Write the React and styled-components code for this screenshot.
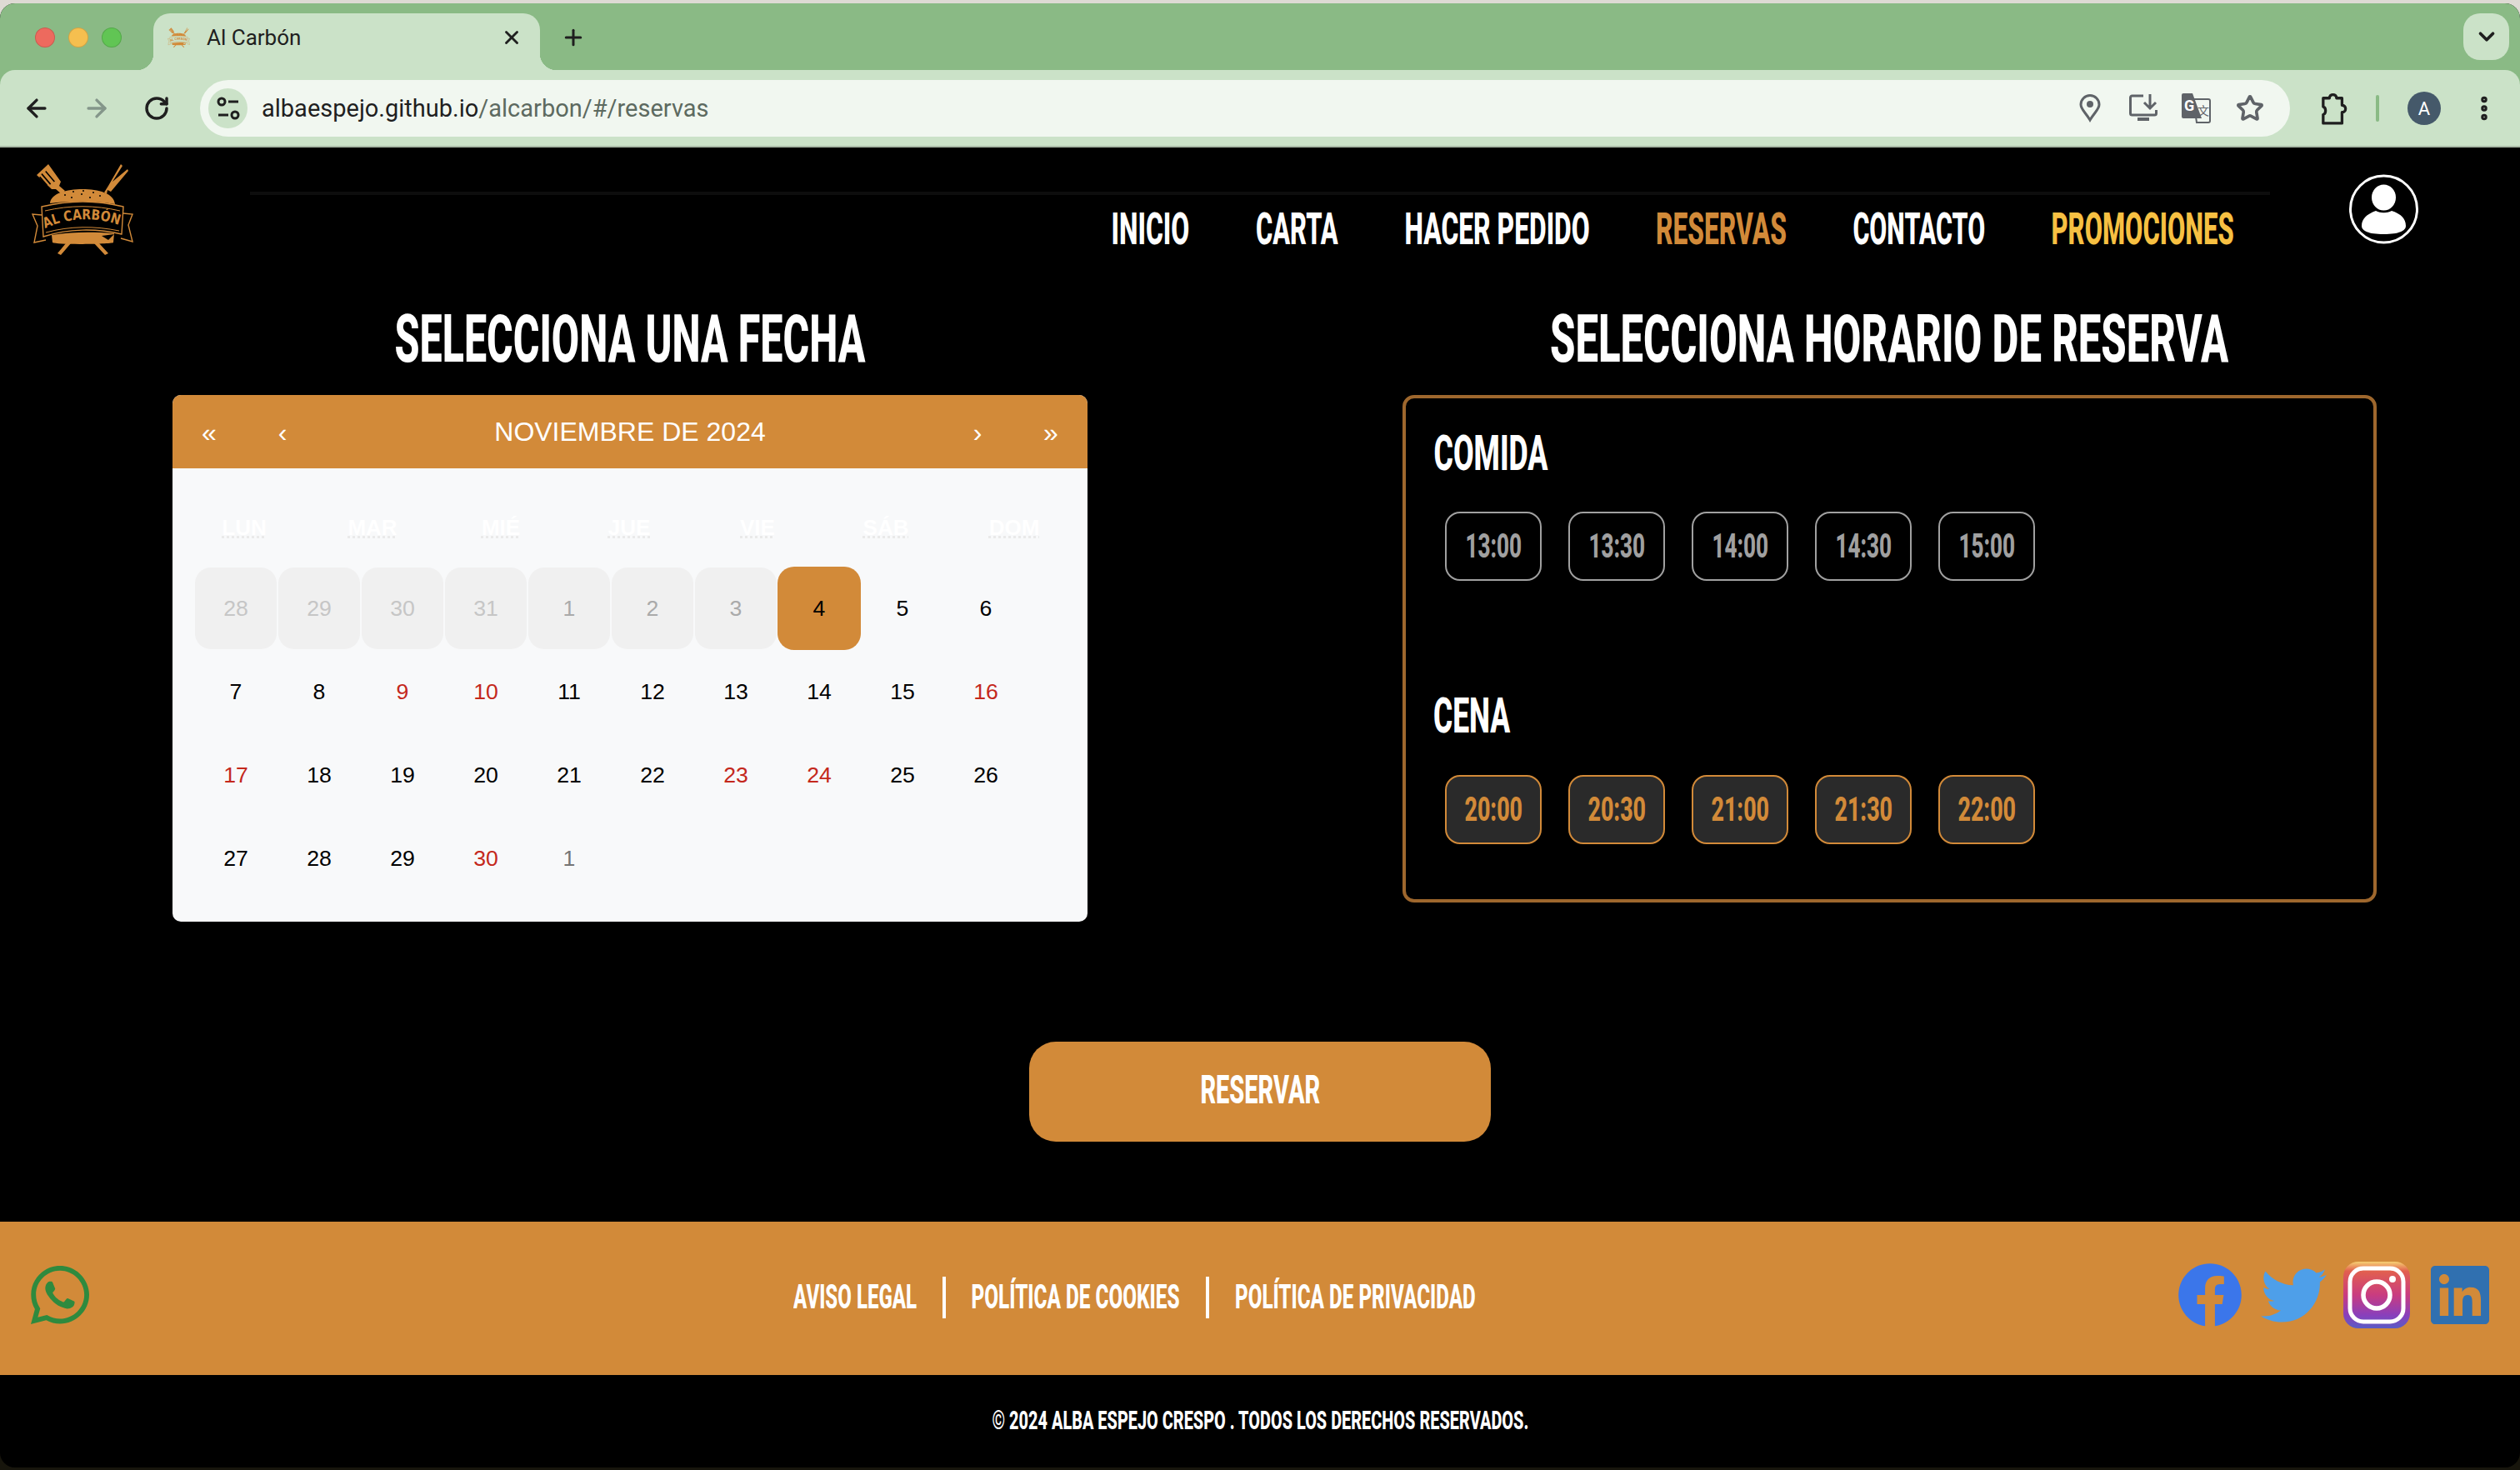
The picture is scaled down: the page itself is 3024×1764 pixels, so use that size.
import React, { useLayoutEffect, useRef } from 'react';
import styled, { createGlobalStyle } from 'styled-components';
import { ArrowLeft, ArrowRight, ChevronDown, MoreVertical, Plus, RotateCw, Star, X } from 'lucide-react';
import { FaFacebook, FaLinkedin, FaTwitter, FaWhatsapp } from 'react-icons/fa';

const ORANGE = '#d28a39';

const GlobalStyle = createGlobalStyle`
    html, body {
        margin: 0;
        padding: 0;
        background: #000;
    }
`;

const Screen = styled.div`
    width: 3024px;
    height: 1764px;
    padding-top: 4px;
    box-sizing: border-box;
    overflow: hidden;
    background: linear-gradient(#dedad4 50%, #17150c 50%);
`;

const Window = styled.div`
    height: 1757px;
    overflow: hidden;
    border-radius: 18px;
    background: #000;
`;

/* browser chrome */
const Chrome = styled.div`
    background: #8aba85;
    font-family: Roboto, sans-serif;
    color: #1f1f1f;
`;

const TabStrip = styled.div`
    height: 80px;
    box-sizing: border-box;
    padding: 12px 13px 0 42px;
    display: flex;
`;

const Lights = styled.div`
    display: flex;
    gap: 16px;
    margin-top: 17px;
`;

const Light = styled.span`
    width: 24px;
    height: 24px;
    box-sizing: border-box;
    border-radius: 50%;
    background: ${props => props.$color};
    border: 1px solid rgba(0, 0, 0, 0.14);
`;

const Tab = styled.div`
    position: relative;
    width: 464px;
    height: 68px;
    box-sizing: border-box;
    margin-left: 38px;
    padding: 0 21px 11px 17px;
    display: flex;
    align-items: center;
    background: #cbe2c8;
    border-radius: 20px 20px 0 0;

    &::before, &::after {
        content: '';
        position: absolute;
        bottom: 0;
        width: 20px;
        height: 20px;
    }
    &::before {
        left: -20px;
        background: radial-gradient(circle at 0 0, transparent 20px, #cbe2c8 20.5px);
    }
    &::after {
        right: -20px;
        background: radial-gradient(circle at 100% 0, transparent 20px, #cbe2c8 20.5px);
    }
`;

const TabTitle = styled.span`
    margin-left: 20px;
    font-size: 26px;
    white-space: nowrap;
`;

const TabClose = styled.span`
    margin-left: auto;
    display: flex;
`;

const NewTab = styled.span`
    margin: 14px 0 0 25px;
    height: 30px;
    display: flex;
`;

const TabMenu = styled.span`
    margin-left: auto;
    width: 55px;
    height: 56px;
    border-radius: 20px;
    background: #cbe2c8;
    display: flex;
    align-items: center;
    justify-content: center;
`;

const Toolbar = styled.div`
    height: 93px;
    box-sizing: border-box;
    padding: 12px 0 0 8px;
    display: flex;
    align-items: flex-start;
    background: #cbe2c8;
    border-bottom: 2px solid #a9b9a6;
    border-radius: 18px 18px 0 0;
`;

const NavButton = styled.span`
    width: 72px;
    height: 68px;
    display: flex;
    align-items: center;
    justify-content: center;
    color: ${props => props.$muted ? '#84968a' : '#1f1f1f'};
`;

const Omnibox = styled.div`
    flex: 0 0 2508px;
    height: 68px;
    box-sizing: border-box;
    margin-left: 16px;
    padding: 0 28px 0 10px;
    display: flex;
    align-items: center;
    background: #f1f7f0;
    border-radius: 34px;
`;

const SiteButton = styled.span`
    width: 47px;
    height: 48px;
    border-radius: 50%;
    background: #cbe2c8;
    display: flex;
    align-items: center;
    justify-content: center;
`;

const Url = styled.div`
    margin-left: 17px;
    font-size: 29px;
    white-space: nowrap;
    color: #5d6a60;

    strong {
        font-weight: 400;
        color: #1f1f1f;
    }
`;

const OmniIcons = styled.div`
    margin-left: auto;
    display: flex;
    gap: 24px;
`;

const OmniIcon = styled.span`
    width: 40px;
    height: 44px;
    display: flex;
    align-items: center;
    justify-content: center;
    color: #5f6368;
`;

const ToolIcons = styled.div`
    height: 68px;
    padding-left: 37px;
    display: flex;
    align-items: center;
    gap: 34px;
`;

const ToolSeparator = styled.span`
    width: 4px;
    height: 32px;
    border-radius: 2px;
    background: #8aba85;
`;

const Avatar = styled.span`
    width: 40px;
    height: 40px;
    border-radius: 50%;
    background: #45596a;
    color: #fff;
    font-size: 22px;
    display: flex;
    align-items: center;
    justify-content: center;
`;

/* bebas neue is not installed: roboto squeezed to the width the text has in the design */
const CondBox = styled.span`
    display: inline-flex;
    justify-content: center;
    width: ${props => props.$w}px;
    font-family: Roboto, "Liberation Sans", sans-serif;
    font-weight: 800;
    white-space: nowrap;
`;

const CondInk = styled.span`
    flex: none;
    transform-origin: center;
`;

const Cond = ({ w, children }) => {
    const ink = useRef(null);

    useLayoutEffect(() => {
        ink.current.style.transform = `scaleX(${w / ink.current.offsetWidth})`;
    }, [w]);

    return <CondBox $w={w}><CondInk ref={ink}>{children}</CondInk></CondBox>;
};

/* site header */
const Header = styled.header`
    height: 190px;
    box-sizing: border-box;
    padding: 19px 0 0 38px;
    display: flex;
    align-items: flex-start;
`;

const NavColumn = styled.div`
    width: 2424px;
    margin: 34px 0 0 140px;
    border-top: 4px solid #0d0d0d;
`;

const Nav = styled.nav`
    padding: 14px 43px 0 0;
    display: flex;
    justify-content: flex-end;
    gap: 79.5px;
`;

const NavLink = styled.a`
    font-size: 54px;
    line-height: 54px;
    color: ${props => props.$color || '#fff'};
`;

const UserButton = styled.span`
    margin: 13px 0 0 95px;
    display: flex;
`;

/* reservation form */
const Columns = styled.main`
    padding-left: 207px;
    display: flex;
    align-items: flex-start;
    gap: 378px;
`;

const Column = styled.section`
    width: ${props => props.$w}px;
    display: flex;
    flex-direction: column;
    align-items: center;
`;

const Heading = styled.h1`
    margin: 0 0 27px;
    font-size: 80px;
    line-height: 80px;
    font-weight: inherit;
    color: #fff;
`;

const Calendar = styled.div`
    width: 100%;
    height: 632px;
    overflow: hidden;
    background: #f8f9fa;
    border-radius: 10px;
    font-family: "Liberation Sans", Arial, sans-serif;
`;

const CalendarBar = styled.div`
    height: 88px;
    display: flex;
    align-items: center;
    background: ${ORANGE};
    color: #fff;
`;

const CalendarArrow = styled.span`
    width: 88px;
    text-align: center;
    font-size: 32px;
    padding-top: 2px;
`;

const CalendarTitle = styled.span`
    flex: 1;
    text-align: center;
    font-size: 32px;
`;

const Weekdays = styled.div`
    margin: 46px 0 22px 9px;
    height: 50px;
    display: grid;
    grid-template-columns: repeat(7, 154px);
    align-items: center;
    justify-items: center;

    abbr {
        font-size: 26px;
        font-weight: 700;
        color: #fff;
        text-decoration: underline dotted #e8e8e8;
    }
`;

const Days = styled.div`
    padding-left: 26px;
    display: grid;
    grid-template-columns: repeat(10, 100px);
    grid-auto-rows: 100px;
`;

const dayStyles = {
    normal: 'color: #000;',
    weekend: 'color: #c4281c;',
    next: 'color: #757575;',
    selected: `color: #000; background: ${ORANGE};`,
    past: 'color: #c6c6c6; background: #f0f0f0; background-clip: padding-box; border: 1px solid transparent;',
    disabled: 'color: #aaa; background: #f0f0f0; background-clip: padding-box; border: 1px solid transparent;',
};

const Day = styled.span`
    box-sizing: border-box;
    display: flex;
    align-items: center;
    justify-content: center;
    border-radius: 20px;
    font-size: 26.67px;
    ${props => dayStyles[props.$kind]}
`;

const ScheduleBox = styled.div`
    width: 100%;
    height: 609px;
    box-sizing: border-box;
    padding: 36px 33px 0;
    border: 4px solid #9e672d;
    border-radius: 14px;
`;

const SlotTitle = styled.h2`
    margin: 0;
    font-size: 60px;
    line-height: 60px;
    font-weight: inherit;
    color: #fff;
`;

const SlotRow = styled.div`
    margin: ${props => props.$last ? 41 : 40}px 0 ${props => props.$last ? 0 : 132}px 14px;
    display: flex;
    gap: 32px;
`;

const SlotButton = styled.span`
    width: 116px;
    height: 83px;
    box-sizing: border-box;
    padding-bottom: 2px;
    display: flex;
    align-items: center;
    justify-content: center;
    border-radius: 18px;
    font-size: 41px;
    border: 2px solid ${props => props.$open ? ORANGE : '#a0a0a0'};
    color: ${props => props.$open ? ORANGE : '#a0a0a0'};
    background: ${props => props.$open ? '#2a2a2a' : 'transparent'};
`;

const ReserveButton = styled.button`
    display: flex;
    align-items: center;
    justify-content: center;
    width: 554px;
    height: 120px;
    margin: 144px auto 96px;
    padding: 0 0 5px;
    border: 0;
    border-radius: 32px;
    background: ${ORANGE};
    color: #fff;
    font-size: 48px;
    line-height: 48px;
`;

/* footer */
const FooterBar = styled.footer`
    height: 184px;
    box-sizing: border-box;
    padding: 48px 32px 0;
    display: flex;
    align-items: flex-start;
    background: ${ORANGE};
`;

const WhatsApp = styled.span`
    display: flex;
    color: #2f8a3e;
`;

const LegalLinks = styled.div`
    margin: 18px 0 0 840px;
    height: 50px;
    display: flex;
    align-items: center;
    gap: 31px;
    font-size: 40px;
    line-height: 40px;
    color: #fff;
`;

const LegalSeparator = styled.span`
    width: 4px;
    height: 50px;
    background: #fff;
`;

const Socials = styled.div`
    margin-left: auto;
    height: 80px;
    display: flex;
    align-items: center;
`;

const Social = styled.span`
    margin-left: ${props => props.$gap}px;
    display: flex;
    color: ${props => props.$color};
`;

const Copyright = styled.div`
    height: 108px;
    display: flex;
    align-items: center;
    justify-content: center;
    font-size: 31px;
    color: #fff;
`;

const Logo = ({ width, height, id, ink = '#000' }) => (
    <svg width={width} height={height} viewBox="0 0 122 110" fill={ORANGE} stroke="none">
        <path d="M6 14 20 1 35 22 33 27 40 33 36 37 29 31 24 31Z" />
        <g stroke={ink} strokeWidth="1.6">
            <path d="M11 14 24 24M15 10 28 20M9.500 18 20 26" transform="rotate(12 18 18)" />
        </g>
        <path d="M107 1 109 3 97 22 115 7 116 9 95 34 91 32 90 37 87 35 92 27Z" />
        <path d="M22 48C23 36 42 31 61 31S99 36 100 49C76 45 46 45 22 48Z" />
        <g fill={ink}>
            <circle cx="40" cy="38" r="1" /><circle cx="50" cy="34" r="1" /><circle cx="60" cy="37" r="1" />
            <circle cx="62" cy="33" r="1" /><circle cx="74" cy="35" r="1" /><circle cx="82" cy="39" r="1" />
            <circle cx="48" cy="41" r="1" /><circle cx="70" cy="41" r="1" />
        </g>
        <path d="M12 52C45 44 78 44 110 52L108 85C78 78 44 78 14 88Z" fill={ink} stroke={ORANGE} strokeWidth="1.4" />
        <path d="M16 57C46 50 76 50 106 57" fill="none" stroke={ORANGE} strokeWidth="1" />
        <path d="M17 83C46 75 76 75 105 81" fill="none" stroke={ORANGE} strokeWidth="1" />
        <path d="M12 62 1 61 7 75 3 95 17 92M110 60 121 61 116 74 121 94 107 90" fill="none" stroke={ORANGE} strokeWidth="1.4" />
        <path id={id} d="M16 78C44 65 78 63 110 76" fill="none" />
        <text fontFamily="DejaVu Sans, sans-serif" fontWeight="700" fontSize="17">
            <textPath href={`#${id}`} textLength="91" lengthAdjust="spacingAndGlyphs">AL CARBÓN</textPath>
        </text>
        <path d="M24 86C50 82 72 82 99 84L98 95C96 97 30 98 25 95Z" />
        <path d="M84 87 99 85 92 92Z" fill={ink} />
        <path d="M41 96 47 96 35 110 31 108ZM75 96 81 96 92 108 88 110Z" />
    </svg>
);

const SiteIcon = () => (
    <svg width="28" height="30" viewBox="0 0 28 30" fill="none" stroke="#1f1f1f" strokeWidth="3">
        <circle cx="6" cy="7" r="4" />
        <path d="M14 7H26M2 23H14" />
        <circle cx="22" cy="23" r="4" />
    </svg>
);

const PinIcon = () => (
    <svg width="26" height="34" viewBox="0 0 26 34" fill="none" stroke="currentColor" strokeWidth="3">
        <path d="M13 31C7 21 2 18 2 12.500A11 11 0 0 1 24 12.500C24 18 19 21 13 31Z" />
        <circle cx="13" cy="12" r="4" fill="currentColor" stroke="none" />
    </svg>
);

const InstallIcon = () => (
    <svg width="34" height="36" viewBox="0 0 34 36" fill="none" stroke="currentColor" strokeWidth="3">
        <path d="M17 3H3.500A2 2 0 0 0 1.500 5V24A2 2 0 0 0 3.500 26H30.500A2 2 0 0 0 32.500 24V20" />
        <path d="M25 1V17M18 11 25 18 32 11" />
        <path d="M10 29H24V33H10Z" fill="currentColor" stroke="none" />
    </svg>
);

const TranslateIcon = () => (
    <svg width="36" height="36" viewBox="0 0 36 36">
        <path d="M14 7H32A2 2 0 0 1 34 9V33A2 2 0 0 1 32 35H18Z" fill="none" stroke="currentColor" strokeWidth="2" />
        <path d="M2 0H13L24 30H2A2 2 0 0 1 0 28V2A2 2 0 0 1 2 0Z" fill="currentColor" />
        <text x="3" y="21" fill="#fff" fontFamily="Roboto, sans-serif" fontWeight="700" fontSize="18">G</text>
        <text x="19" y="26" fill="currentColor" fontFamily="Noto Sans CJK SC, sans-serif" fontSize="14">文</text>
    </svg>
);

const ExtensionIcon = () => (
    <svg width="32" height="44" viewBox="0 0 34 44" fill="none" stroke="#1f1f1f" strokeWidth="3.500">
        <path d="M3 9H11C11 3 20 3 20 9H27V18C33 18 33 27 27 27V41H3V30C7 29 7 21 3 20Z" strokeLinejoin="round" />
    </svg>
);

const UserIcon = () => (
    <svg width="83" height="84" viewBox="0 0 83 84">
        <circle cx="41.500" cy="42" r="40" fill="#000" stroke="#fff" strokeWidth="3" />
        <ellipse cx="41.500" cy="28" rx="14.500" ry="15.500" fill="#fff" />
        <path d="M15 62C15 52 24 47 32 44C38 47 45 47 51 44C60 47 68 52 68 62C68 68 60 72 41.500 72S15 68 15 62Z" fill="#fff" />
    </svg>
);

const InstagramIcon = () => (
    <svg width="80" height="80" viewBox="0 0 80 80">
        <defs>
            <linearGradient id="insta" x1="0" y1="0" x2="0" y2="1">
                <stop offset="0" stopColor="#f6cf72" />
                <stop offset="0.14" stopColor="#e2604e" />
                <stop offset="0.5" stopColor="#c93c80" />
                <stop offset="0.8" stopColor="#8a3fbb" />
                <stop offset="1" stopColor="#5a5cc4" />
            </linearGradient>
        </defs>
        <rect width="80" height="80" rx="18" fill="url(#insta)" />
        <rect x="8" y="8" width="64" height="64" rx="16" fill="none" stroke="#fff" strokeWidth="5" />
        <circle cx="40" cy="40" r="16" fill="none" stroke="#fff" strokeWidth="5.500" />
        <circle cx="59" cy="21" r="4" fill="#fff" />
    </svg>
);

const weekdays = ['LUN', 'MAR', 'MIÉ', 'JUE', 'VIE', 'SÁB', 'DOM'];
const weekdayNames = ['lunes', 'martes', 'miércoles', 'jueves', 'viernes', 'sábado', 'domingo'];

const days = [
    [28, 'past'], [29, 'past'], [30, 'past'], [31, 'past'], [1, 'disabled'], [2, 'disabled'], [3, 'disabled'],
    [4, 'selected'], [5, 'normal'], [6, 'normal'], [7, 'normal'], [8, 'normal'], [9, 'weekend'], [10, 'weekend'],
    [11, 'normal'], [12, 'normal'], [13, 'normal'], [14, 'normal'], [15, 'normal'], [16, 'weekend'],
    [17, 'weekend'], [18, 'normal'], [19, 'normal'], [20, 'normal'], [21, 'normal'], [22, 'normal'],
    [23, 'weekend'], [24, 'weekend'], [25, 'normal'], [26, 'normal'], [27, 'normal'], [28, 'normal'],
    [29, 'normal'], [30, 'weekend'], [1, 'next'],
];

const navLinks = [
    { label: 'INICIO', w: 94 },
    { label: 'CARTA', w: 99 },
    { label: 'HACER PEDIDO', w: 222 },
    { label: 'RESERVAS', w: 157, color: ORANGE },
    { label: 'CONTACTO', w: 159 },
    { label: 'PROMOCIONES', w: 219, color: '#f7c042' },
];

const lunch = ['13:00', '13:30', '14:00', '14:30', '15:00'];
const dinner = ['20:00', '20:30', '21:00', '21:30', '22:00'];

const App = () => (
    <Screen>
        <GlobalStyle />
        <Window>
            <Chrome>
                <TabStrip>
                    <Lights>
                        <Light $color="#ed6a5e" />
                        <Light $color="#f5bf4f" />
                        <Light $color="#61c554" />
                    </Lights>
                    <Tab>
                        <Logo width={27} height={24} id="favicon-ribbon" ink="#cbe2c8" />
                        <TabTitle>Al Carbón</TabTitle>
                        <TabClose><X size={26} strokeWidth={2.6} /></TabClose>
                    </Tab>
                    <NewTab><Plus size={30} strokeWidth={2.4} /></NewTab>
                    <TabMenu><ChevronDown size={30} strokeWidth={3} /></TabMenu>
                </TabStrip>
                <Toolbar>
                    <NavButton><ArrowLeft size={34} strokeWidth={2.4} /></NavButton>
                    <NavButton $muted><ArrowRight size={34} strokeWidth={2.4} /></NavButton>
                    <NavButton><RotateCw size={32} strokeWidth={2.6} /></NavButton>
                    <Omnibox>
                        <SiteButton><SiteIcon /></SiteButton>
                        <Url><strong>albaespejo.github.io</strong>/alcarbon/#/reservas</Url>
                        <OmniIcons>
                            <OmniIcon><PinIcon /></OmniIcon>
                            <OmniIcon><InstallIcon /></OmniIcon>
                            <OmniIcon><TranslateIcon /></OmniIcon>
                            <OmniIcon><Star size={34} strokeWidth={2.6} /></OmniIcon>
                        </OmniIcons>
                    </Omnibox>
                    <ToolIcons>
                        <ExtensionIcon />
                        <ToolSeparator />
                        <Avatar>A</Avatar>
                        <MoreVertical size={36} strokeWidth={3} />
                    </ToolIcons>
                </Toolbar>
            </Chrome>

            <Header>
                <Logo width={122} height={110} id="header-ribbon" />
                <NavColumn>
                    <Nav>
                        {navLinks.map(link => (
                            <NavLink key={link.label} $color={link.color}><Cond w={link.w}>{link.label}</Cond></NavLink>
                        ))}
                    </Nav>
                </NavColumn>
                <UserButton><UserIcon /></UserButton>
            </Header>

            <Columns>
                <Column $w={1098}>
                    <Heading><Cond w={565}>SELECCIONA UNA FECHA</Cond></Heading>
                    <Calendar>
                        <CalendarBar>
                            <CalendarArrow>«</CalendarArrow>
                            <CalendarArrow>‹</CalendarArrow>
                            <CalendarTitle>NOVIEMBRE DE 2024</CalendarTitle>
                            <CalendarArrow>›</CalendarArrow>
                            <CalendarArrow>»</CalendarArrow>
                        </CalendarBar>
                        <Weekdays>
                            {weekdays.map((day, i) => <abbr key={day} title={weekdayNames[i]}>{day}</abbr>)}
                        </Weekdays>
                        <Days>
                            {days.map(([day, kind], i) => <Day key={i} $kind={kind}>{day}</Day>)}
                        </Days>
                    </Calendar>
                </Column>
                <Column $w={1169}>
                    <Heading><Cond w={814}>SELECCIONA HORARIO DE RESERVA</Cond></Heading>
                    <ScheduleBox>
                        <SlotTitle><Cond w={137}>COMIDA</Cond></SlotTitle>
                        <SlotRow>
                            {lunch.map(time => <SlotButton key={time}><Cond w={68}>{time}</Cond></SlotButton>)}
                        </SlotRow>
                        <SlotTitle><Cond w={92}>CENA</Cond></SlotTitle>
                        <SlotRow $last>
                            {dinner.map(time => <SlotButton key={time} $open><Cond w={70}>{time}</Cond></SlotButton>)}
                        </SlotRow>
                    </ScheduleBox>
                </Column>
            </Columns>

            <ReserveButton><Cond w={144}>RESERVAR</Cond></ReserveButton>

            <FooterBar>
                <WhatsApp><FaWhatsapp size={80} /></WhatsApp>
                <LegalLinks>
                    <Cond w={148}>AVISO LEGAL</Cond>
                    <LegalSeparator />
                    <Cond w={250}>POLÍTICA DE COOKIES</Cond>
                    <LegalSeparator />
                    <Cond w={289}>POLÍTICA DE PRIVACIDAD</Cond>
                </LegalLinks>
                <Socials>
                    <Social $color="#3b76ea"><FaFacebook size={78} /></Social>
                    <Social $gap={22} $color="#4e9fe9"><FaTwitter size={79} /></Social>
                    <Social $gap={20}><InstagramIcon /></Social>
                    <Social $gap={20} $color="#3070b0"><FaLinkedin size={80} /></Social>
                </Socials>
            </FooterBar>
            <Copyright><Cond w={644}>© 2024 ALBA ESPEJO CRESPO . TODOS LOS DERECHOS RESERVADOS.</Cond></Copyright>
        </Window>
    </Screen>
);

export default App;
